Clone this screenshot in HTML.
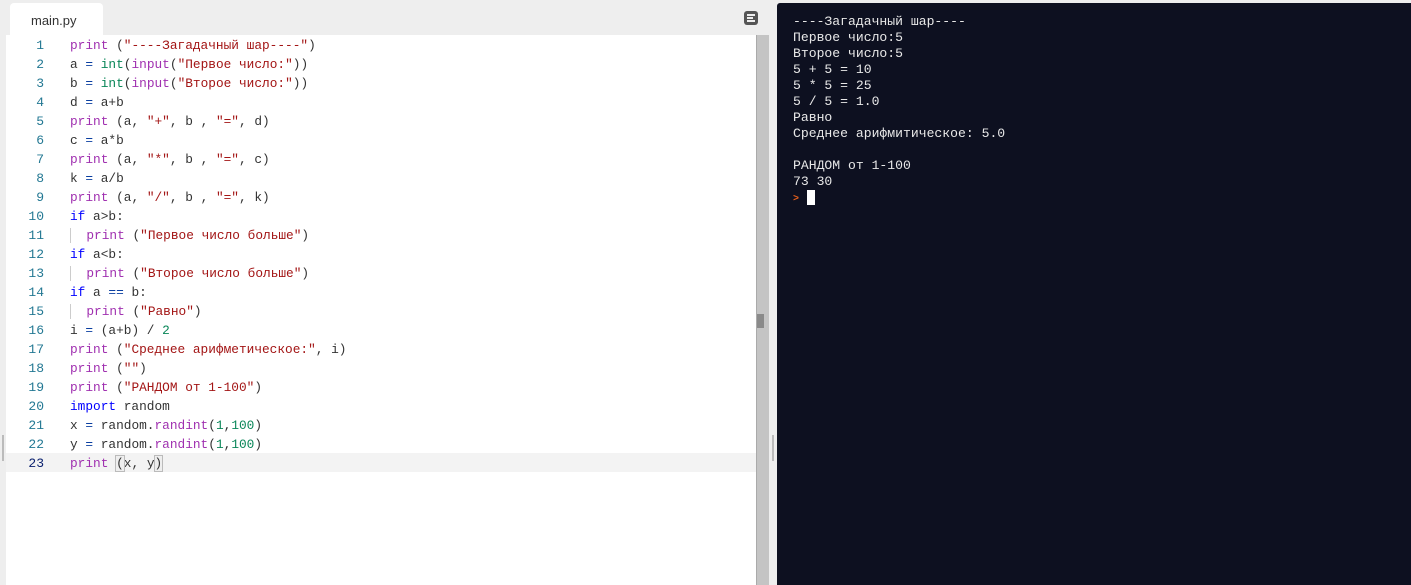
<!DOCTYPE html>
<html><head><meta charset="utf-8"><style>
*{margin:0;padding:0;box-sizing:border-box}
body{width:1411px;height:585px;background:#eeeeee;position:relative;overflow:hidden;font-family:"Liberation Mono",monospace}
.tab{position:absolute;left:10px;top:3px;width:93px;height:33px;background:#fff;border-radius:4px 4px 0 0;font:13px "Liberation Sans",sans-serif;color:#333;padding:10px 0 0 21px}
.ed{position:absolute;left:6px;top:35px;width:750px;height:550px;background:#fff}
.sb{position:absolute;left:756px;top:35px;width:13px;height:550px;background:#c4c4c4;border-left:1px solid #aaa}
.th{position:absolute;left:757px;top:314px;width:7px;height:14px;background:#8a8a8a}
.hl{position:absolute;left:6px;top:453px;width:750px;height:19px;background:#f3f3f3}
.ln{position:absolute;left:14px;width:30px;text-align:right;font-size:13px;color:#237893;line-height:19px}
.cd{position:absolute;left:70px;font-size:12.8px;color:#333;line-height:19px;white-space:pre}
.k{color:#a030b0}.s{color:#a31515}.n{color:#098658}.b{color:#0000ff}.o{color:#0a3ea0}
.term{position:absolute;left:777px;top:3px;width:634px;height:582px;background:#0d1020;border-radius:3px 0 0 0;color:#e8e8e8;font:13.1px/16px "Liberation Mono",monospace;padding:11px 0 0 16px;white-space:pre}
.ic{position:absolute;left:744px;top:11px;width:14px;height:14px;background:#555;border-radius:3px}
.ic i{position:absolute;left:3px;height:2px;background:#eee}
</style></head><body>
<div class="tab">main.py</div>
<div class="ic"><i style="top:3px;width:8px"></i><i style="top:6px;width:6px"></i><i style="top:9px;width:8px"></i></div>
<div class="ed"></div>
<div class="hl"></div>
<div class="sb"></div><div class="th"></div>
<div style="position:absolute;left:772px;top:435px;width:2px;height:26px;background:#bbb"></div>
<div style="position:absolute;left:2px;top:435px;width:2px;height:26px;background:#bbb"></div>
<div class="ln" style="top:36px;line-height:19px">1<br>2<br>3<br>4<br>5<br>6<br>7<br>8<br>9<br>10<br>11<br>12<br>13<br>14<br>15<br>16<br>17<br>18<br>19<br>20<br>21<br>22<br><span style="color:#0b216f">23</span></div>
<div class="cd" style="top:36px"><span class="k">print</span> (<span class="s">"----Загадачный шар----"</span>)
a <span class="o">=</span> <span class="n">int</span>(<span class="k">input</span>(<span class="s">"Первое число:"</span>))
b <span class="o">=</span> <span class="n">int</span>(<span class="k">input</span>(<span class="s">"Второе число:"</span>))
d <span class="o">=</span> a+b
<span class="k">print</span> (a, <span class="s">"+"</span>, b , <span class="s">"="</span>, d)
c <span class="o">=</span> a*b
<span class="k">print</span> (a, <span class="s">"*"</span>, b , <span class="s">"="</span>, c)
k <span class="o">=</span> a/b
<span class="k">print</span> (a, <span class="s">"/"</span>, b , <span class="s">"="</span>, k)
<span class="b">if</span> a>b:
<span style="border-left:1px solid #ccc"> </span> <span class="k">print</span> (<span class="s">"Первое число больше"</span>)
<span class="b">if</span> a&lt;b:
<span style="border-left:1px solid #ccc"> </span> <span class="k">print</span> (<span class="s">"Второе число больше"</span>)
<span class="b">if</span> a <span class="o">==</span> b:
<span style="border-left:1px solid #ccc"> </span> <span class="k">print</span> (<span class="s">"Равно"</span>)
i <span class="o">=</span> (a+b) / <span class="n">2</span>
<span class="k">print</span> (<span class="s">"Среднее арифметическое:"</span>, i)
<span class="k">print</span> (<span class="s">""</span>)
<span class="k">print</span> (<span class="s">"РАНДОМ от 1-100"</span>)
<span class="b">import</span> random
x <span class="o">=</span> random.<span class="k">randint</span>(<span class="n">1</span>,<span class="n">100</span>)
y <span class="o">=</span> random.<span class="k">randint</span>(<span class="n">1</span>,<span class="n">100</span>)
<span class="k">print</span> <span style="outline:1px solid #bbb;background:#eee">(</span>x, y<span style="outline:1px solid #bbb;background:#eee">)</span></div>
<div class="term">----Загадачный шар----
Первое число:5
Второе число:5
5 + 5 = 10
5 * 5 = 25
5 / 5 = 1.0
Равно
Среднее арифмитическое: 5.0

РАНДОМ от 1-100
73 30
<span style="color:#e8601c;font-size:10px;font-weight:bold">&gt;</span> <span style="background:#fff">&nbsp;</span></div>
</body></html>
